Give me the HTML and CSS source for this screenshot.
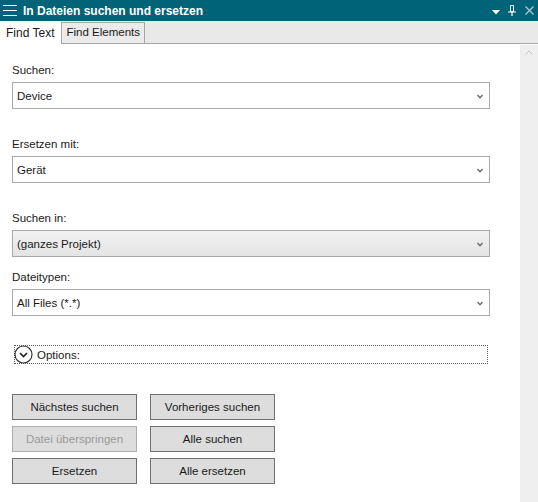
FILE: index.html
```html
<!DOCTYPE html>
<html lang="de">
<head>
    <meta charset="UTF-8">
    <title>In Dateien suchen und ersetzen</title>
    <link rel="stylesheet" href="styles.css">
</head>
<body>
    <div class="window">
        <header class="titlebar">
            <svg class="menu-icon" width="14" height="11" viewBox="0 0 14 11">
                <path d="M0 0.5h14M0 5.5h14M0 10.5h14" stroke="#fff" stroke-width="1"/>
            </svg>
            <span class="title">In Dateien suchen und ersetzen</span>
            <div class="title-buttons">
                <svg class="tb-drop" width="8" height="5" viewBox="0 0 8 5">
                    <polygon points="0,0 8,0 4,4.5" fill="#fff"/>
                </svg>
                <svg class="tb-pin" width="8" height="11" viewBox="0 0 8 11">
                    <path d="M2.5 0.5h3v6h-3z" fill="none" stroke="#fff" stroke-width="1"/>
                    <path d="M0 7h8M4 7v4" stroke="#fff" stroke-width="1.2"/>
                </svg>
                <svg class="tb-close" width="9" height="9" viewBox="0 0 9 9">
                    <path d="M0.5 0.5l8 8M8.5 0.5l-8 8" stroke="#a3c6cf" stroke-width="1.4"/>
                </svg>
            </div>
        </header>

        <nav class="tabs">
            <div class="tab active">Find Text</div>
            <div class="tab">Find Elements</div>
        </nav>

        <div class="main">
            <section class="content">
                <div class="field">
                    <label>Suchen:</label>
                    <div class="combo">
                        <span>Device</span>
                        <svg class="chev" width="6" height="5" viewBox="0 0 6 5"><polyline points="0.5,1 3,3.8 5.5,1" fill="none" stroke="#666" stroke-width="1.3"/></svg>
                    </div>
                </div>
                <div class="field">
                    <label>Ersetzen mit:</label>
                    <div class="combo">
                        <span>Gerät</span>
                        <svg class="chev" width="6" height="5" viewBox="0 0 6 5"><polyline points="0.5,1 3,3.8 5.5,1" fill="none" stroke="#666" stroke-width="1.3"/></svg>
                    </div>
                </div>
                <div class="field">
                    <label>Suchen in:</label>
                    <div class="combo readonly">
                        <span>(ganzes Projekt)</span>
                        <svg class="chev" width="6" height="5" viewBox="0 0 6 5"><polyline points="0.5,1 3,3.8 5.5,1" fill="none" stroke="#666" stroke-width="1.3"/></svg>
                    </div>
                </div>
                <div class="field tight">
                    <label>Dateitypen:</label>
                    <div class="combo">
                        <span>All Files (*.*)</span>
                        <svg class="chev" width="6" height="5" viewBox="0 0 6 5"><polyline points="0.5,1 3,3.8 5.5,1" fill="none" stroke="#666" stroke-width="1.3"/></svg>
                    </div>
                </div>

                <div class="expander">
                    <svg class="exp-icon" width="19" height="19" viewBox="0 0 19 19">
                        <circle cx="9.5" cy="9.5" r="8.5" fill="#fff" stroke="#333" stroke-width="1.2"/>
                        <polyline points="6,8 9.5,11.5 13,8" fill="none" stroke="#222" stroke-width="1.6"/>
                    </svg>
                    <span>Options:</span>
                </div>

                <div class="buttons">
                    <button>Nächstes suchen</button>
                    <button>Vorheriges suchen</button>
                    <button disabled>Datei überspringen</button>
                    <button>Alle suchen</button>
                    <button>Ersetzen</button>
                    <button>Alle ersetzen</button>
                </div>
            </section>

            <aside class="scrollbar">
                <svg class="scroll-up" width="8" height="5" viewBox="0 0 8 5">
                    <polyline points="0.5,4.5 4,1 7.5,4.5" fill="none" stroke="#c4c4c4" stroke-width="1"/>
                </svg>
            </aside>
        </div>
    </div>
</body>
</html>
```

FILE: styles.css
```css
* {
    margin: 0;
    padding: 0;
    box-sizing: border-box;
}

body {
    font-family: 'Liberation Sans', Arial, sans-serif;
    font-size: 11.5px;
    color: #1a1a1a;
    background-color: #fff;
}

.window {
    width: 538px;
    height: 502px;
    display: flex;
    flex-direction: column;
    overflow: hidden;
}

/* title bar */
.titlebar {
    height: 21px;
    background-color: #006378;
    display: flex;
    align-items: center;
    color: #fff;
}

.menu-icon {
    margin-left: 3px;
}

.title {
    margin-left: 6px;
    font-weight: bold;
    font-size: 12px;
}

.title-buttons {
    margin-left: auto;
    display: flex;
    align-items: center;
    padding-right: 4px;
}

.tb-drop {
    margin-top: 3px;
}

.tb-pin {
    margin-left: 8px;
}

.tb-close {
    margin-left: 9px;
}

/* tabs */
.tabs {
    height: 23px;
    background-color: #e9e9e9;
    border-bottom: 1px solid #a6a6a6;
    display: flex;
    align-items: flex-end;
}

.tab {
    height: 21px;
    padding: 0 4px;
    line-height: 19px;
    border: 1px solid #a6a6a6;
    border-bottom: none;
    background-color: #ebebeb;
    font-size: 11.5px;
}

.tab.active {
    height: 23px;
    margin-bottom: -1px;
    line-height: 24px;
    padding: 0 7px 0 6px;
    border: none;
    background-color: #fff;
    font-size: 12px;
}

/* main area */
.main {
    flex: 1;
    display: flex;
}

.content {
    flex: 1;
    padding: 18px 30px 0 12px;
}

.scrollbar {
    width: 18px;
    margin-top: 1px;
    background-color: #efefef;
    display: flex;
    justify-content: center;
}

.scroll-up {
    margin-top: 5px;
}

.field {
    margin-bottom: 27px;
}

.field.tight {
    margin-bottom: 0;
}

.field:nth-child(3) {
    margin-bottom: 12px;
}

.field label {
    display: block;
    height: 16px;
    line-height: 16px;
    margin-bottom: 4px;
}

.combo {
    height: 27px;
    border: 1px solid #a9a9a9;
    background-color: #fff;
    display: flex;
    align-items: center;
    padding: 0 6px 0 4px;
}

.combo span {
    flex: 1;
}

.combo.readonly {
    background: linear-gradient(#f2f2f2, #e4e4e4);
}

.chev {
    margin-top: 1px;
}

/* options expander */
.expander {
    margin: 29px 2px 0 2px;
    height: 19px;
    border: 1px dotted #5f5f5f;
    display: flex;
    align-items: center;
    gap: 4px;
}

.exp-icon {
    margin-left: -1px;
}

/* buttons */
.buttons {
    margin-top: 30px;
    display: grid;
    grid-template-columns: 125px 125px;
    grid-auto-rows: 26px;
    column-gap: 13px;
    row-gap: 6px;
}

.buttons button {
    font-family: inherit;
    font-size: 11.5px;
    color: #1a1a1a;
    background-color: #dddddd;
    border: 1px solid #707070;
}

.buttons button:disabled {
    color: #9a9a9a;
    border-color: #adadad;
}
```
